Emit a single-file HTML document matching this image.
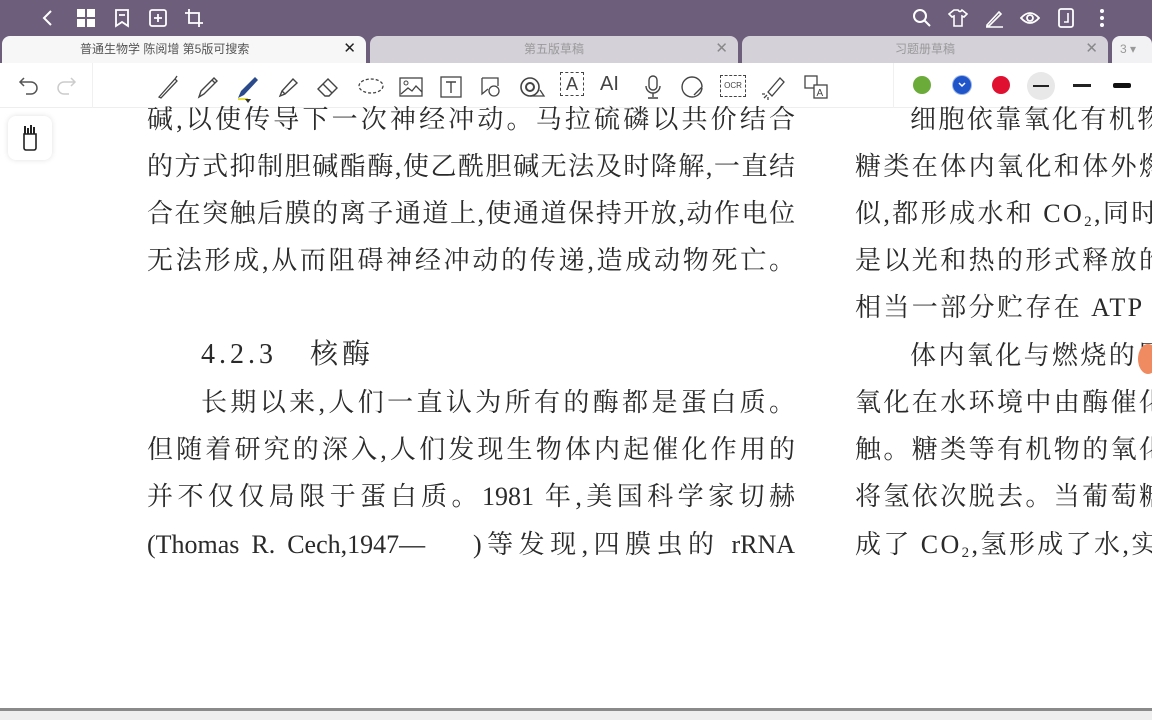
<!DOCTYPE html>
<html><head><meta charset="utf-8"><style>
*{margin:0;padding:0;box-sizing:border-box}
body{width:1152px;height:720px;overflow:hidden;background:#fff;position:relative;font-family:"Liberation Sans","Noto Sans CJK SC",sans-serif}
.top{position:absolute;left:0;top:0;width:1152px;height:38px;background:#6d5e7c}
.ic{position:absolute;top:8px;width:20px;height:20px}
.tabs{position:absolute;left:0;top:36px;width:1152px;height:27px;background:#6d5e7c}
.tab{position:absolute;top:0;height:27px;border-radius:8px 8px 0 0;background:#d5d1d9;font-size:12px;color:#999;text-align:center;line-height:26px}
.tab .x{position:absolute;right:10px;top:0;font-size:15px;color:#888}
.tool{position:absolute;left:0;top:63px;width:1152px;height:45px;background:#fff;border-bottom:1px solid #eee}
.t{position:absolute;top:11px}
.dot{position:absolute;top:76px;width:18px;height:18px;border-radius:50%}
.pg{position:absolute;font-family:"Liberation Serif","Noto Serif CJK SC",serif;font-size:26px;color:#2a2a2a;white-space:nowrap;line-height:30px}
.l{position:absolute;left:147px;width:648px;text-align:justify;text-align-last:justify}
.r{position:absolute;left:855px;letter-spacing:2.4px}
sub{font-size:15px;vertical-align:-4px}
</style></head><body>
<div class="top">
<svg class="ic" style="left:38px" viewBox="0 0 20 20"><path d="M13 3 6 10l7 7" fill="none" stroke="#fff" stroke-width="2"/></svg>
<svg class="ic" style="left:76px" viewBox="0 0 20 20" fill="#fff"><rect x="1" y="1" width="8" height="8"/><rect x="11" y="1" width="8" height="8"/><rect x="1" y="11" width="8" height="8"/><rect x="11" y="11" width="8" height="8"/></svg>
<svg class="ic" style="left:112px" viewBox="0 0 20 20"><path d="M4 2h12v16l-6-4-6 4z M7 7h6" fill="none" stroke="#fff" stroke-width="1.8"/></svg>
<svg class="ic" style="left:148px" viewBox="0 0 20 20"><rect x="2" y="2" width="16" height="16" rx="2" fill="none" stroke="#fff" stroke-width="1.8"/><path d="M10 6v8M6 10h8" stroke="#fff" stroke-width="1.8"/></svg>
<svg class="ic" style="left:184px" viewBox="0 0 20 20"><path d="M5 1v14h14M1 5h14v14" fill="none" stroke="#fff" stroke-width="1.8"/></svg>
<svg class="ic" style="left:912px" viewBox="0 0 20 20"><circle cx="8" cy="8" r="6" fill="none" stroke="#fff" stroke-width="2"/><path d="M12.5 12.5 18 18" stroke="#fff" stroke-width="2"/></svg>
<svg class="ic" style="left:948px" viewBox="0 0 20 20"><path d="M6 2 1 6l3 3 2-1v10h8V8l2 1 3-3-5-4q-2 3-4 0z" fill="none" stroke="#fff" stroke-width="1.6"/></svg>
<svg class="ic" style="left:984px" viewBox="0 0 20 20"><path d="M3 17 15 4l2 2L5 18H3zM2 19h17" fill="none" stroke="#fff" stroke-width="1.6"/></svg>
<svg class="ic" style="left:1020px" viewBox="0 0 20 20"><path d="M1 10q9-10 18 0q-9 10-18 0z" fill="none" stroke="#fff" stroke-width="1.8"/><circle cx="10" cy="10" r="3" fill="none" stroke="#fff" stroke-width="1.8"/></svg>
<svg class="ic" style="left:1056px" viewBox="0 0 20 20"><rect x="3" y="1" width="14" height="18" rx="2" fill="none" stroke="#fff" stroke-width="1.8"/><path d="M12 5v9H8" fill="none" stroke="#fff" stroke-width="1.6"/></svg>
<svg class="ic" style="left:1092px" viewBox="0 0 20 20" fill="#fff"><circle cx="10" cy="3" r="2"/><circle cx="10" cy="10" r="2"/><circle cx="10" cy="17" r="2"/></svg>
</div>
<div class="tabs">
<div class="tab" style="left:2px;width:364px;background:#f7f7f8;color:#555;text-align:left;padding-left:78px">普通生物学 陈阅增 第5版可搜索<span class="x" style="color:#222">✕</span></div>
<div class="tab" style="left:370px;width:368px">第五版草稿<span class="x">✕</span></div>
<div class="tab" style="left:742px;width:366px">习题册草稿<span class="x">✕</span></div>
<div class="tab" style="left:1112px;width:40px;text-align:left;padding-left:8px;background:#f2f2f4">3 ▾</div>
</div>
<div class="tool">
<svg class="t" style="left:18px" width="22" height="22" viewBox="0 0 22 22"><path d="M6 4 2 8l4 4M2 8h11a6 6 0 0 1 0 12H8" fill="none" stroke="#555" stroke-width="1.5"/></svg>
<svg class="t" style="left:55px" width="22" height="22" viewBox="0 0 22 22"><path d="M16 4l4 4-4 4M20 8H9a6 6 0 0 0 0 12h5" fill="none" stroke="#ccc" stroke-width="1.5"/></svg>
<div style="position:absolute;left:92px;top:0;width:1px;height:45px;background:#f0f0f0"></div>
<svg class="t" style="left:155px" width="26" height="26" viewBox="0 0 26 26"><path d="M4 23 20 5l2 2L6 24zM20 5l2-3" fill="none" stroke="#444" stroke-width="1.3"/></svg>
<svg class="t" style="left:195px" width="26" height="26" viewBox="0 0 26 26"><path d="M4 23l2-6L19 4l3 3L9 20zM17 6l3 3" fill="none" stroke="#444" stroke-width="1.4"/></svg>
<svg class="t" style="left:235px" width="26" height="26" viewBox="0 0 26 26"><path d="M3 24l3-7L20 3l3 3L9 21z" fill="#2a4a8c"/><path d="M3 25h10" stroke="#e8e040" stroke-width="2"/></svg>
<div style="position:absolute;left:245px;top:36px;width:0;height:0;border:3px solid transparent;border-top:4px solid #333"></div>
<svg class="t" style="left:275px" width="26" height="26" viewBox="0 0 26 26"><path d="M5 22l2-5 11-12 4 4-12 11zM7 17l3 3" fill="none" stroke="#444" stroke-width="1.4"/></svg>
<svg class="t" style="left:315px" width="26" height="26" viewBox="0 0 26 26"><path d="M3 15 13 5l9 9-8 8H10zM8 10l9 9" fill="none" stroke="#444" stroke-width="1.4"/></svg>
<svg class="t" style="left:357px" width="28" height="26" viewBox="0 0 28 26"><ellipse cx="14" cy="12" rx="12" ry="7" fill="none" stroke="#444" stroke-width="1.3" stroke-dasharray="3 2"/></svg>
<svg class="t" style="left:398px" width="26" height="26" viewBox="0 0 26 26"><rect x="2" y="4" width="22" height="18" fill="none" stroke="#444" stroke-width="1.3"/><circle cx="8" cy="9" r="2" fill="none" stroke="#444"/><path d="M3 20l7-6 4 3 4-5 6 6" fill="none" stroke="#444" stroke-width="1.3"/></svg>
<svg class="t" style="left:438px" width="26" height="26" viewBox="0 0 26 26"><rect x="3" y="3" width="20" height="20" fill="none" stroke="#444" stroke-width="1.3"/><path d="M8 8h10M13 8v11" stroke="#444" stroke-width="1.4"/></svg>
<svg class="t" style="left:478px" width="26" height="26" viewBox="0 0 26 26"><path d="M4 4h16v8M4 4v16l6-5" fill="none" stroke="#444" stroke-width="1.3"/><circle cx="16" cy="17" r="5" fill="none" stroke="#444" stroke-width="1.3"/></svg>
<svg class="t" style="left:518px" width="28" height="26" viewBox="0 0 28 26"><circle cx="12" cy="13" r="9" fill="none" stroke="#444" stroke-width="1.6"/><circle cx="12" cy="13" r="4" fill="none" stroke="#444" stroke-width="2"/><path d="M12 22h14l-4-6" fill="none" stroke="#444" stroke-width="1.3"/></svg>
<div class="t" style="left:560px;top:9px;width:24px;height:24px;border:1.3px dashed #444;font-size:18px;text-align:center;line-height:22px;color:#444">A</div>
<div class="t" style="left:600px;top:10px;font-size:20px;color:#444">AI</div>
<svg class="t" style="left:642px" width="22" height="26" viewBox="0 0 22 26"><rect x="7" y="2" width="8" height="14" rx="4" fill="none" stroke="#444" stroke-width="1.4"/><path d="M4 12a7 7 0 0 0 14 0M11 19v4M6 24h10" fill="none" stroke="#444" stroke-width="1.4"/></svg>
<svg class="t" style="left:680px" width="26" height="26" viewBox="0 0 26 26"><path d="M22 14A10 10 0 1 1 12 3h0a10 10 0 0 1 10 10l-8 8" fill="none" stroke="#444" stroke-width="1.4"/></svg>
<div class="t" style="left:720px;top:12px;width:26px;height:22px;border:1.3px dashed #444;font-size:8px;text-align:center;line-height:20px;color:#444">OCR</div>
<svg class="t" style="left:760px" width="28" height="28" viewBox="0 0 28 28"><path d="M8 18 20 4l4 4-12 14zM4 24l3-3M2 20h3M8 26v-3" fill="none" stroke="#444" stroke-width="1.3"/></svg>
<svg class="t" style="left:803px" width="26" height="26" viewBox="0 0 26 26"><rect x="2" y="2" width="12" height="12" fill="none" stroke="#444" stroke-width="1.3"/><rect x="11" y="11" width="13" height="13" fill="#fff" stroke="#444" stroke-width="1.3"/><text x="13.5" y="22" font-size="10" font-family="Liberation Sans" fill="#444">A</text></svg>
<div style="position:absolute;left:893px;top:0;width:1px;height:45px;background:#f0f0f0"></div>
</div>
<div class="dot" style="left:913px;background:#6aab3a"></div>
<div class="dot" style="left:953px;background:#1f55c8;box-shadow:0 0 0 1px #9bb5e8"></div>
<svg style="position:absolute;left:957px;top:81px" width="10" height="8" viewBox="0 0 10 8"><path d="M2 2l3 3 3-3" fill="none" stroke="#fff" stroke-width="1.5"/></svg>
<div class="dot" style="left:992px;background:#e01030"></div>
<div style="position:absolute;left:1027px;top:72px;width:28px;height:28px;border-radius:50%;background:#e8e8e8"></div>
<div style="position:absolute;left:1033px;top:85px;width:16px;height:2px;background:#222"></div>
<div style="position:absolute;left:1073px;top:84px;width:18px;height:3px;background:#222"></div>
<div style="position:absolute;left:1113px;top:83px;width:18px;height:5px;border-radius:2px;background:#111"></div>
<div style="position:absolute;left:8px;top:116px;width:44px;height:44px;border-radius:8px;background:#fff;box-shadow:0 0 6px rgba(0,0,0,.12)"></div>
<svg style="position:absolute;left:20px;top:124px" width="20" height="28" viewBox="0 0 20 28"><path d="M4 10h12v14a2 2 0 0 1-2 2H6a2 2 0 0 1-2-2z" fill="none" stroke="#222" stroke-width="1.6"/><path d="M5 2v8M8 4v6M11 1v9M14 3v7" stroke="#222" stroke-width="2"/></svg>
<div class="pg">
<div class="l" style="top:105px">碱,以使传导下一次神经冲动。马拉硫磷以共价结合</div>
<div class="l" style="top:152px">的方式抑制胆碱酯酶,使乙酰胆碱无法及时降解,一直结</div>
<div class="l" style="top:199px">合在突触后膜的离子通道上,使通道保持开放,动作电位</div>
<div class="l" style="top:246px">无法形成,从而阻碍神经冲动的传递,造成动物死亡。</div>
<div style="position:absolute;left:201px;top:340px;font-size:28px;letter-spacing:4px">4.2.3&nbsp;&nbsp;&nbsp;核酶</div>
<div class="l" style="top:388px;left:201px;width:594px">长期以来,人们一直认为所有的酶都是蛋白质。</div>
<div class="l" style="top:435px">但随着研究的深入,人们发现生物体内起催化作用的</div>
<div class="l" style="top:482px">并不仅仅局限于蛋白质。1981 年,美国科学家切赫</div>
<div class="l" style="top:530px">(Thomas R. Cech,1947—&nbsp;&nbsp;&nbsp;&nbsp;)等发现,四膜虫的 rRNA</div>
<div class="r" style="top:105px;left:910px">细胞依靠氧化有机物</div>
<div class="r" style="top:152px">糖类在体内氧化和体外燃</div>
<div class="r" style="top:199px">似,都形成水和 CO<sub>2</sub>,同时</div>
<div class="r" style="top:246px">是以光和热的形式释放的</div>
<div class="r" style="top:293px">相当一部分贮存在 ATP 中</div>
<div class="r" style="top:341px;left:910px">体内氧化与燃烧的异</div>
<div class="r" style="top:388px">氧化在水环境中由酶催化</div>
<div class="r" style="top:435px">触。糖类等有机物的氧化</div>
<div class="r" style="top:482px">将氢依次脱去。当葡萄糖</div>
<div class="r" style="top:530px">成了 CO<sub>2</sub>,氢形成了水,实</div>
</div>
<div style="position:absolute;left:1138px;top:344px;width:20px;height:30px;border-radius:50%;background:#f08a60"></div>
<div style="position:absolute;left:0;top:708px;width:1152px;height:3px;background:#8a8a8a"></div>
<div style="position:absolute;left:0;top:711px;width:1152px;height:9px;background:#eeeeee"></div>
</body></html>
